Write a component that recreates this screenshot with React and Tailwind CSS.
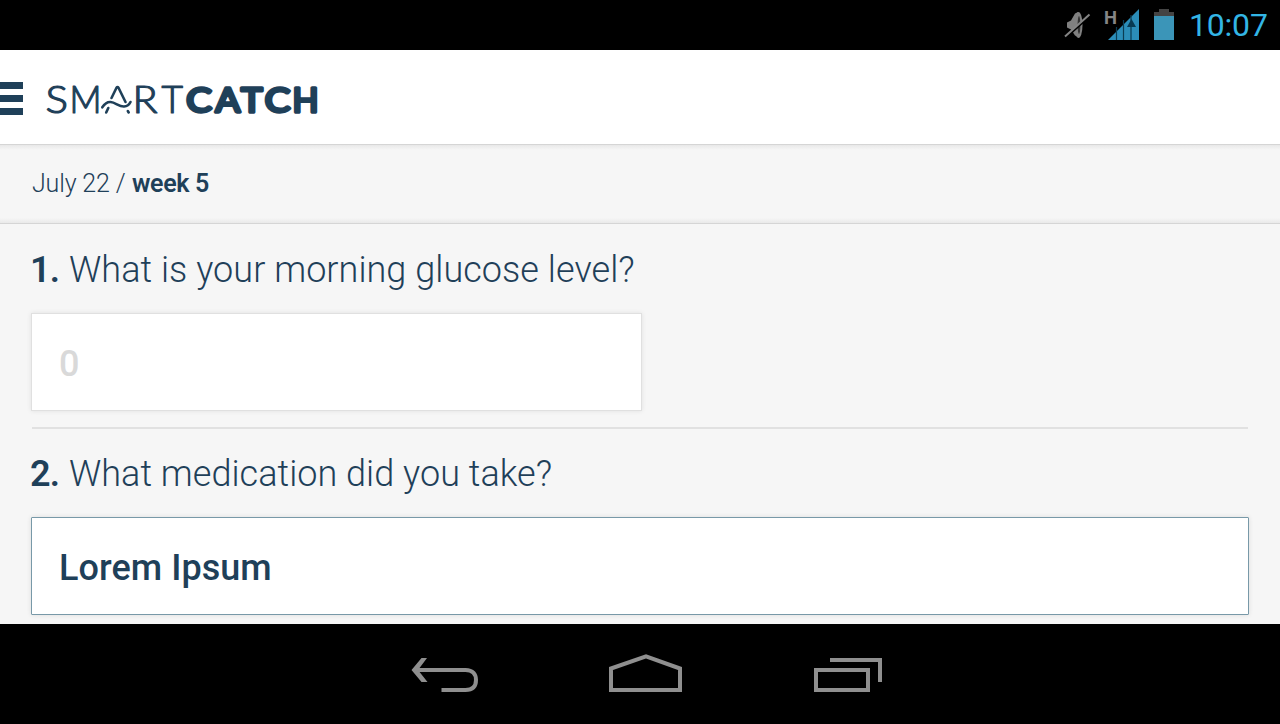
function MutedIcon() {
  return (
    <svg width="28" height="32" viewBox="0 0 28 32" fill="none" aria-hidden="true">
      <path d="M3 13.500l4-2 4-7 3-1.500v25l-3-1.500-4-6-4-2z" fill="#808080" />
      <ellipse cx="14.500" cy="16" rx="4" ry="13" fill="#808080" />
      <ellipse cx="15" cy="16" rx="1.400" ry="9" fill="#333" />
      <path d="M1.500 29L26.500 6.500" stroke="#000" strokeWidth="2" />
      <path d="M1 27.500L25.500 5.500" stroke="#858585" strokeWidth="2" />
    </svg>
  );
}

function SignalIcon() {
  return (
    <svg width="34" height="34" viewBox="0 0 34 34" className="overflow-visible" aria-hidden="true">
      <path d="M3 33L34 2V33z" fill="#2b8db8" />
      <path d="M11.500 20v13M18.500 13v20M26 8v25" stroke="#0b3c52" strokeWidth="1.200" />
      <path d="M22 20l4.500-8 4.500 8z" fill="#083a52" />
      <text x="-1" y="16.500" className="fill-[#858585] font-['Roboto'] text-[19px] font-bold" textLength="13" lengthAdjust="spacingAndGlyphs">H</text>
    </svg>
  );
}

function BatteryIcon() {
  return (
    <svg width="20" height="32" viewBox="0 0 20 32" aria-hidden="true">
      <path d="M5 0h10v3h5v5H0V3h5z" fill="#444" />
      <path d="M0 7h20v24H0z" fill="#3b95b8" />
    </svg>
  );
}

function Logo() {
  return (
    <svg width="290" height="60" viewBox="40 70 290 60" aria-label="SMARTCATCH" fill="#1f4059" stroke="#1f4059" strokeLinejoin="round" strokeLinecap="round">
      <g className="font-['Lato'] text-[37px] font-light" strokeWidth="1.2">
        <text x="45.500" y="113.200" textLength="22.500" lengthAdjust="spacingAndGlyphs">S</text>
        <text x="69.500" y="113.200" textLength="32" lengthAdjust="spacingAndGlyphs">M</text>
        <text x="132.500" y="113.200" textLength="25" lengthAdjust="spacingAndGlyphs">R</text>
        <text x="161.500" y="113.200" textLength="21.500" lengthAdjust="spacingAndGlyphs">T</text>
      </g>
      <g fill="none" strokeWidth="2.600">
        <path d="M111.500 98L116.500 87.800Q117.500 86.300 118.500 87.800L125.500 102M108.300 108L106.200 112.500M127.800 111L128.700 112.500" />
        <path d="M102.300 107.300C105 103.200 107.500 101.800 110.500 102C115.500 102.300 119 106.800 124 106.500C127.500 106.200 129.300 104.500 130.500 102" />
      </g>
      <g className="font-['Lato'] text-[33.500px] font-normal" strokeWidth="3.400">
        <text x="186.200" y="111.800" textLength="25.500" lengthAdjust="spacingAndGlyphs">C</text>
        <text x="215.500" y="111.800" textLength="24.500" lengthAdjust="spacingAndGlyphs">A</text>
        <text x="241" y="111.800" textLength="21.500" lengthAdjust="spacingAndGlyphs">T</text>
        <text x="264.700" y="111.800" textLength="25.500" lengthAdjust="spacingAndGlyphs">C</text>
        <text x="292.500" y="111.800" textLength="26" lengthAdjust="spacingAndGlyphs">H</text>
      </g>
    </svg>
  );
}

function StatusBar() {
  return (
    <div className="flex h-[50px] shrink-0 items-start justify-end bg-black pr-3">
      <div className="mr-[13px] mt-[9px]"><MutedIcon /></div>
      <div className="mr-[15px] mt-[7px]"><SignalIcon /></div>
      <div className="mr-[15px] mt-[9px]"><BatteryIcon /></div>
      <span className="w-[79px] whitespace-nowrap text-[32px] leading-[51px] tracking-[-0.2px] text-[#33b5e5]">10:07</span>
    </div>
  );
}

function Question({ number, text, spacing }) {
  return (
    <h2 className="flex h-[42px] items-center whitespace-nowrap text-[36px] font-light leading-[42px]">
      <strong className="-ml-px w-[39px] shrink-0 font-semibold tracking-[-0.8px]">{number}.</strong>
      <span className={spacing}>{text}</span>
    </h2>
  );
}

function NavBar() {
  return (
    <nav className="flex h-[100px] shrink-0 items-start bg-black pl-[411px] pt-[28px]">
      <button aria-label="Back" className="mr-[129px]">
        <svg width="69" height="42" viewBox="411 652 69 42" fill="none" stroke="#8f8f8f" strokeWidth="4">
          <path d="M416 670H465.500C473 670 476 674.500 476 680C476 686 473 690 465.500 690H441.500" />
          <path d="M427 658h-5.500L411.500 670L421.500 682H427.500L418 670z" fill="#8f8f8f" stroke="none" />
        </svg>
      </button>
      <button aria-label="Home" className="mr-[131px]">
        <svg width="74" height="42" viewBox="609 652 74 42" fill="none" stroke="#8f8f8f" strokeWidth="4">
          <path d="M611 690V668.500L646 656.300L680 668.500V690z" />
        </svg>
      </button>
      <button aria-label="Recent apps">
        <svg width="70" height="42" viewBox="814 652 70 42" fill="none" stroke="#8f8f8f" strokeWidth="4">
          <path d="M816 670H868V690H816zM830 660H880V682" />
        </svg>
      </button>
    </nav>
  );
}

export default function App() {
  return (
    <div className="flex h-[724px] w-[1280px] flex-col overflow-hidden bg-[#f6f6f6] font-['Roboto',sans-serif] text-[#1f4059]">
      <StatusBar />
      <header className="flex h-[94px] shrink-0 items-start bg-white pt-5">
        <button aria-label="Menu" className="mr-[17px] mt-3 flex w-[23px] flex-col gap-[6px]">
          <span className="h-[7px] bg-[#1f4059]" />
          <span className="h-[7px] bg-[#1f4059]" />
          <span className="h-[7px] bg-[#1f4059]" />
        </button>
        <Logo />
      </header>
      <div className="flex h-20 shrink-0 items-center whitespace-pre border-y border-[#d5d5d5] bg-[linear-gradient(to_bottom,#e8e8e8,#f6f6f6_5px,#f6f6f6_73px,#e9e9e9)] pl-8 text-[25px] font-light">
        <span className="w-[100px] tracking-[-0.150px]">July 22 / </span>
        <strong className="font-semibold tracking-[-0.350px]">week 5</strong>
      </div>
      <main className="flex h-[400px] shrink-0 flex-col px-[31px] pt-[25px]">
        <Question number={1} text="What is your morning glucose level?" spacing="tracking-[0.050px]" />
        <input aria-label="Glucose level" placeholder="0" className="mt-[22px] h-[98px] w-[611px] shrink-0 border border-[#e0e0e0] bg-white pl-[27px] pr-7 pt-1 text-[36px] font-medium shadow-[0_0_5px_rgba(0,0,0,0.09)] outline-none placeholder:text-[#d9d9d9]" />
        <hr className="mx-px mt-4 h-0.5 shrink-0 border-0 bg-[#e1e1e1]" />
        <div className="mt-6"><Question number={2} text="What medication did you take?" spacing="tracking-[0.030px]" /></div>
        <input aria-label="Medication" defaultValue="Lorem Ipsum" className="mt-[22px] h-[98px] w-full shrink-0 rounded-[1px] border border-[#7899a8] bg-white pl-[27px] pr-7 pt-1 text-[36px] font-medium tracking-[0.050px] shadow-[0_0_5px_rgba(0,0,0,0.1)] outline-none" />
      </main>
      <NavBar />
    </div>
  );
}
